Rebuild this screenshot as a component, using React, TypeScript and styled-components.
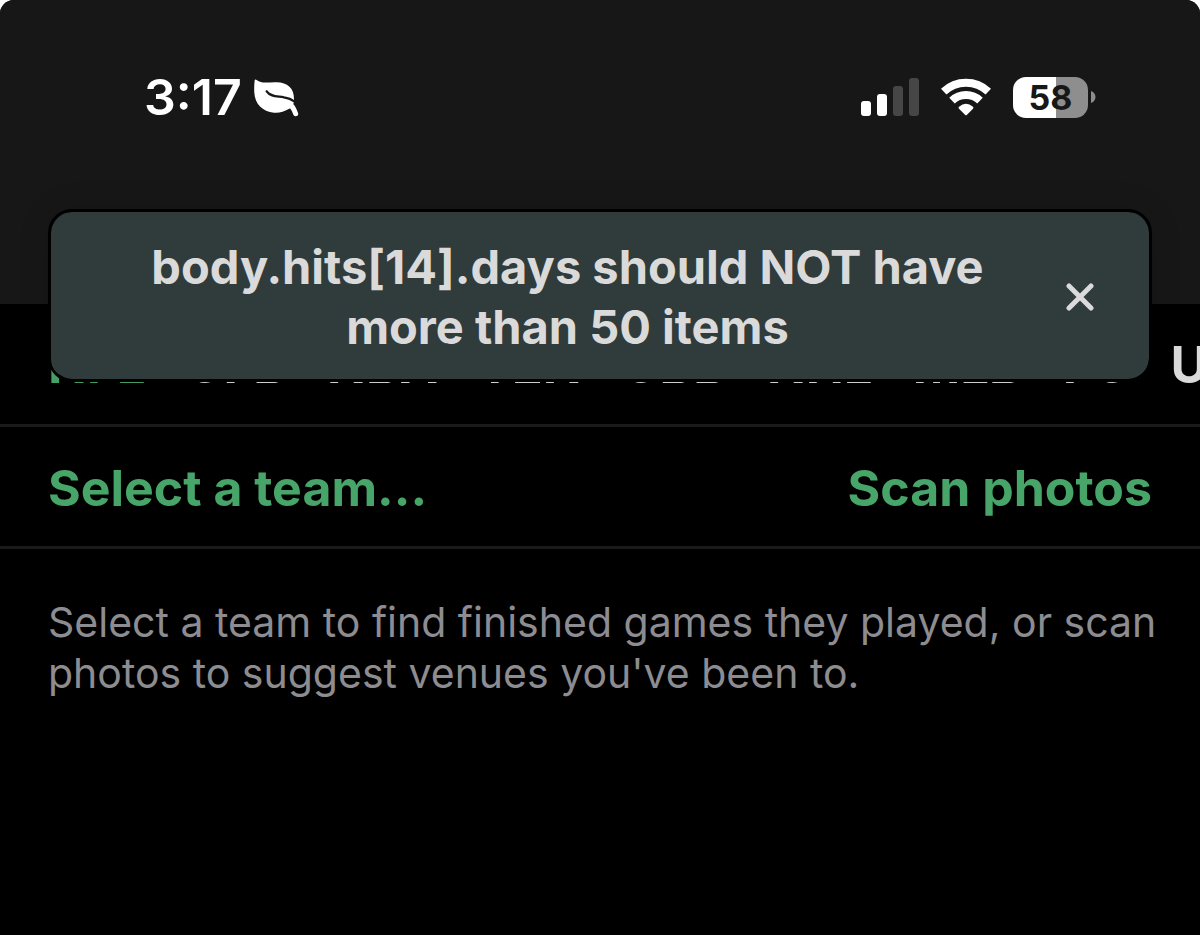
import { useState } from "react";
import styled, { createGlobalStyle } from "styled-components";

const colors = {
  black: "#000",
  header: "#171717",
  toast: "#303c3c",
  divider: "#1a1a1a",
  green: "#48a56a",
  light: "#dadada",
  gray: "#8c8c91",
  white: "#fff",
  dim: "#464646",
  battery: "#8e8e8e",
};

const GlobalStyle = createGlobalStyle`
  * {
    box-sizing: border-box;
  }

  body {
    margin: 0;
    background: ${colors.white};
  }

  button {
    margin: 0;
    padding: 0;
    border: 0;
    background: none;
    font-family: inherit;
    cursor: pointer;
  }
`;

const Screen = styled.div`
  position: relative;
  min-height: 100vh;
  overflow: hidden;
  border-radius: 14px 14px 0 0;
  background: ${colors.black};
  color: ${colors.light};
  font-family: Inter, "Liberation Sans", sans-serif;
`;

const Header = styled.header`
  height: 304px;
  padding: 67px 104px 0 144px;
  background: ${colors.header};
`;

const StatusBar = styled.div`
  display: flex;
  align-items: center;
  justify-content: space-between;
  height: 60px;
  color: ${colors.white};
`;

const StatusGroup = styled.div<{ $gap: number }>`
  display: flex;
  align-items: center;
  gap: ${({ $gap }) => $gap}px;
`;

const Time = styled.time`
  font-size: 50px;
  font-weight: 600;
  line-height: 60px;
`;

const Battery = styled.div`
  display: flex;
  align-items: center;
  gap: 3px;
`;

const BatteryLevel = styled.div`
  display: flex;
  align-items: center;
  justify-content: center;
  width: 75px;
  height: 41px;
  border-radius: 13px;
  background: linear-gradient(
    to right,
    ${colors.white} 58%,
    ${colors.battery} 58%
  );
  color: ${colors.header};
  font-size: 34px;
  font-weight: 700;
`;

const Toast = styled.div`
  position: absolute;
  top: 209px;
  left: 48px;
  right: 48px;
  display: flex;
  align-items: center;
  padding: 25px 47px 22px 26px;
  border: 3px solid ${colors.black};
  border-radius: 24px;
  background: ${colors.toast};
  background-clip: padding-box;
  box-shadow: 0 0 32px rgb(0 0 0 / 12%);

  p {
    flex: 1;
    margin: 0;
    padding: 0 24px;
    font-size: 47px;
    font-weight: 700;
    line-height: 60px;
    text-align: center;
  }

  button {
    display: flex;
    align-items: center;
    justify-content: center;
    width: 44px;
    height: 60px;
    color: ${colors.light};
  }
`;

const Tabs = styled.nav`
  display: flex;
  align-items: center;
  gap: 40px;
  height: 123px;
  padding: 2px 48px 0;
  overflow: hidden;
  border-bottom: 3px solid ${colors.divider};
`;

const Tab = styled.button<{ $active: boolean }>`
  flex: none;
  color: ${({ $active }) => ($active ? colors.green : colors.light)};
  font-size: 51px;
  font-weight: 700;
  line-height: 60px;
`;

const Actions = styled.div`
  display: flex;
  align-items: center;
  justify-content: space-between;
  height: 122px;
  padding: 2px 48px 0;
  border-bottom: 3px solid ${colors.divider};

  button {
    color: ${colors.green};
    font-size: 50px;
    font-weight: 700;
    line-height: 60px;
  }
`;

const Hint = styled.p`
  margin: 0;
  padding: 48px 40px 48px 48px;
  color: ${colors.gray};
  font-size: 41px;
  line-height: 51px;
`;

const LeafIcon = () => (
  <svg width="45" height="40" viewBox="0 -6 135 120" fill="none">
    <path
      d="M2 4C2 0 6 1 9 4C22 15 44 9 68 10C100 11 121 27 120 62C121 74 114 86 104 90C90 98 75 103 60 101C25 98 3 74 1 42C0 28 1 14 2 4Z"
      fill={colors.white}
    />
    <path
      d="M38 37C50 54 70 51 90 55C104 57 113 61 122 68"
      stroke={colors.header}
      strokeWidth="7"
      strokeLinecap="round"
    />
    <path
      d="M98 70C112 76 120 88 125 104"
      stroke={colors.white}
      strokeWidth="15"
      strokeLinecap="round"
    />
  </svg>
);

const SignalIcon = () => (
  <svg width="58" height="38" viewBox="0 0 58 38">
    <rect x="0" y="23" width="10" height="15" rx="3" fill={colors.white} />
    <rect x="16" y="16" width="10" height="22" rx="3" fill={colors.white} />
    <rect x="32" y="8" width="10" height="30" rx="3" fill={colors.dim} />
    <rect x="48" y="0" width="10" height="38" rx="3" fill={colors.dim} />
  </svg>
);

const WifiIcon = () => (
  <svg width="50" height="38" viewBox="0 0 150 114" fill="none">
    <g stroke={colors.white} strokeWidth="24">
      <path d="M8 41A97 97 0 0 1 142 41" />
      <path d="M33 68A61 61 0 0 1 117 68" />
    </g>
    <path
      d="M54 86Q75 68 96 86Q99 89 96 92L78 110Q75 113 72 110L54 92Q51 89 54 86Z"
      fill={colors.white}
    />
  </svg>
);

const BatteryCap = () => (
  <svg width="5" height="12" viewBox="0 0 5 12">
    <path d="M0 0C6 2 6 10 0 12Z" fill={colors.battery} />
  </svg>
);

const CloseIcon = () => (
  <svg width="28" height="28" viewBox="0 0 28 28">
    <path
      d="M3 3L25 25M25 3L3 25"
      stroke="currentColor"
      strokeWidth="5"
      strokeLinecap="round"
    />
  </svg>
);

const LEAGUES = ["NFL", "CFB", "NBA", "TEN", "CBB", "NHL", "MLB", "FC", "UFC"];

const App = () => {
  const [league, setLeague] = useState("NFL");
  const [showError, setShowError] = useState(true);

  return (
    <Screen>
      <GlobalStyle />
      <Header>
        <StatusBar>
          <StatusGroup $gap={12}>
            <Time>3:17</Time>
            <LeafIcon />
          </StatusGroup>
          <StatusGroup $gap={22}>
            <SignalIcon />
            <WifiIcon />
            <Battery>
              <BatteryLevel>58</BatteryLevel>
              <BatteryCap />
            </Battery>
          </StatusGroup>
        </StatusBar>
      </Header>
      <Tabs>
        {LEAGUES.map((name) => (
          <Tab
            key={name}
            $active={name === league}
            onClick={() => setLeague(name)}
          >
            {name}
          </Tab>
        ))}
      </Tabs>
      <Actions>
        <button>Select a team...</button>
        <button>Scan photos</button>
      </Actions>
      <Hint>
        Select a team to find finished games they played, or scan photos to
        suggest venues you've been to.
      </Hint>
      {showError && (
        <Toast role="alert">
          <p>body.hits[14].days should NOT have more than 50 items</p>
          <button aria-label="Close" onClick={() => setShowError(false)}>
            <CloseIcon />
          </button>
        </Toast>
      )}
    </Screen>
  );
};

export default App;
